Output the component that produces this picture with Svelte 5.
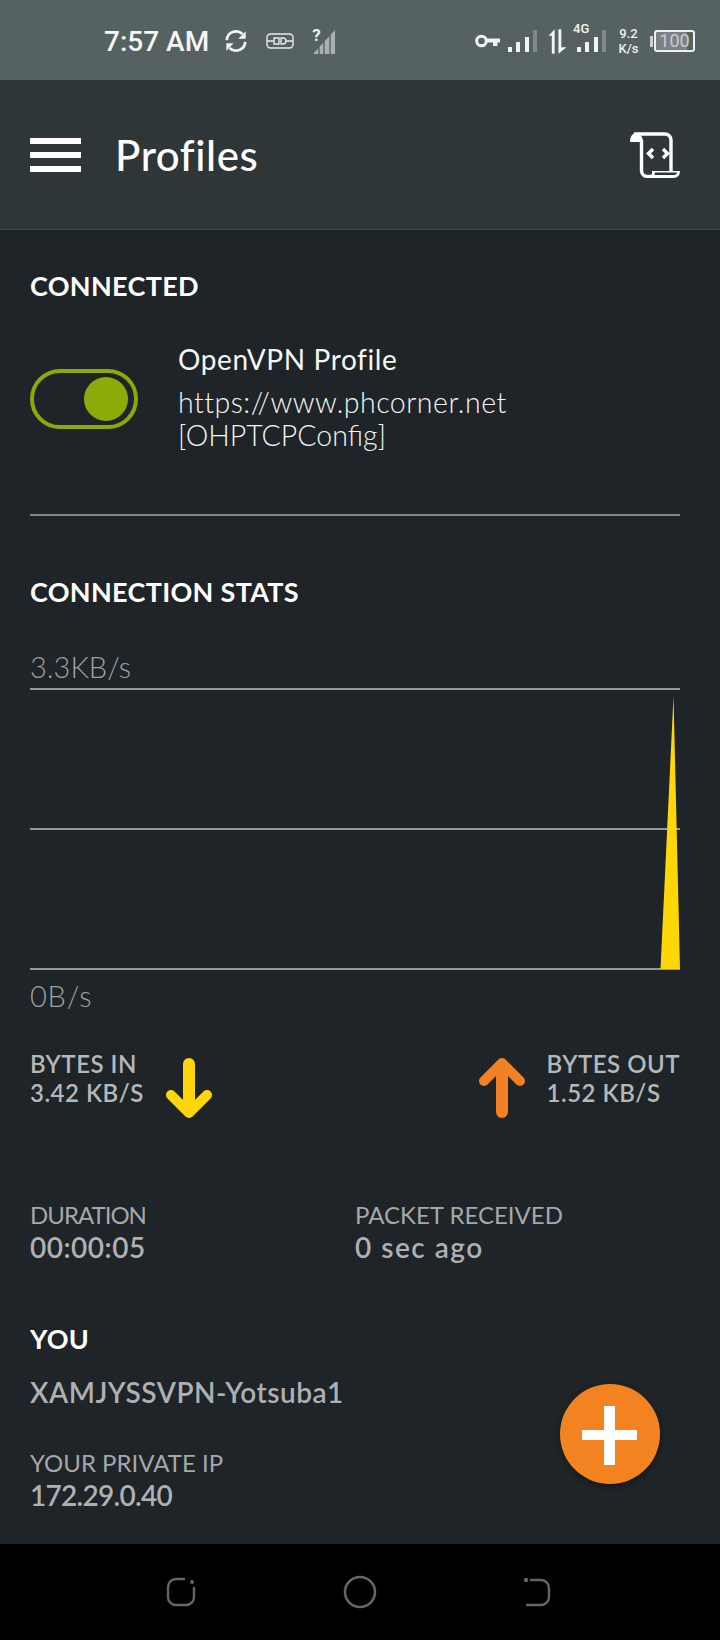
<script>
  const bars = [5, 10, 15]
</script>

<div class="phone">
  <header class="status">
    <div class="status-left">
      <span class="clock">7:57 AM</span>
      <svg class="ic-sync" width="24" height="26" viewBox="0 0 26 26" fill="none" stroke="#f2f4f4" stroke-width="3">
        <path d="M3 12a10 10 0 0 1 17-6.5" />
        <path d="M23 14a10 10 0 0 1-17 6.5" />
        <path d="M23.5 2.5v8h-8z" fill="#f2f4f4" stroke="none" />
        <path d="M2.5 23.5v-8h8z" fill="#f2f4f4" stroke="none" />
      </svg>
      <svg class="ic-plug" width="28" height="16" viewBox="0 0 28 16" fill="none" stroke="#e8ecec" stroke-width="1.4">
        <rect x="1" y="1" width="26" height="14" rx="3.5" />
        <path d="M1 8h7M20 8h7M8 5h5v6H8zM15 5h2a3 3 0 0 1 0 6h-2z" />
      </svg>
      <div class="nosim">
        <span class="q">?</span>
        <svg width="24" height="24" viewBox="0 0 24 24"><path d="M1 24l22-24v24z" fill="#a9b0b0" /><path d="M7 17v7M12 11v13M18 5v19" stroke="#56605f" stroke-width="1.4" /></svg>
      </div>
    </div>
    <div class="status-right">
      <svg width="25" height="14" viewBox="0 0 25 14" fill="none">
        <circle cx="6.5" cy="7" r="4.8" stroke="#f2f4f4" stroke-width="3" />
        <path d="M10 4.500h15v4h-2.600v3.500H18V8.500h-8z" fill="#f2f4f4" />
      </svg>
      <div class="sig">
        {#each bars as h}<i style="height:{h}px"></i>{/each}<i class="off"></i>
      </div>
      <svg class="updown" width="19" height="25" viewBox="0 0 20 26" fill="#f2f4f4">
        <path d="M7 0v26H4V7H0.600z" />
        <path d="M11 26V0h3v19h5.400z" />
      </svg>
      <div class="g4">
        <span>4G</span>
        <div class="sig small">
          {#each bars as h}<i style="height:{h}px"></i>{/each}<i class="off"></i>
        </div>
      </div>
      <div class="speed"><span>9.2</span><span>K/s</span></div>
      <div class="batt">
        <i class="nub"></i>
        <div class="cell">100</div>
      </div>
    </div>
  </header>

  <div class="toolbar">
    <div class="burger"><i></i><i></i><i></i></div>
    <h1>Profiles</h1>
    <svg class="script" width="50" height="46" viewBox="0 0 50 46" fill="none" stroke="#fff" stroke-width="3.4">
      <path d="M4 2h31a6 6 0 0 1 6 6v31" />
      <path d="M11.500 8v31a6 6 0 0 0 6 5.500h24" />
      <path d="M0 10c0-6 3-9 6-9s7 3 7 9z" fill="#fff" stroke="none" />
      <path d="M22 39h28c0 4-2 7-7 7H18c4-1 4-4 4-7z" fill="#fff" stroke="none" />
      <path d="M25 40.500h22c-.5 2-1.500 2.500-4 2.500H24.500z" fill="#2f3638" stroke="none" />
      <path d="M23 17l-4.500 4.500 4.500 4.500M33 17l4.500 4.500-4.500 4.500" stroke-width="3.4" />
    </svg>
  </div>

  <main class="content">
    <h2 class="first">CONNECTED</h2>
    <div class="profile">
      <div class="toggle"><i></i></div>
      <div class="info">
        <div class="name">OpenVPN Profile</div>
        <div class="server">https://www.phcorner.net</div>
        <div class="server config">[OHPTCPConfig]</div>
      </div>
    </div>
    <hr />

    <h2 class="stats-title">CONNECTION STATS</h2>
    <div class="axis top">3.3KB/s</div>
    <svg class="chart" width="650" height="282" viewBox="0 0 650 282">
      <path d="M0 1h650M0 141h650M0 281h650" stroke="#b9bdbe" stroke-width="1.6" />
      <polygon points="630.500,281 643.500,8 650,281" fill="#ffd60a" />
    </svg>
    <div class="axis bottom">0B/s</div>

    <div class="rates">
      <div class="rate">
        <div class="rate-text">
          <div>BYTES IN</div>
          <div>3.42 KB/S</div>
        </div>
        <svg width="50" height="62" viewBox="0 0 50 62" fill="none" stroke="#ffd60a" stroke-width="12" stroke-linecap="round" stroke-linejoin="round">
          <path d="M25 7v46" />
          <path d="M7 38l18 18 18-18" stroke-width="10" />
        </svg>
      </div>
      <div class="rate">
        <svg width="50" height="62" viewBox="0 0 50 62" fill="none" stroke="#f28123" stroke-width="12" stroke-linecap="round" stroke-linejoin="round">
          <path d="M25 55V9" />
          <path d="M7 24L25 6l18 18" stroke-width="10" />
        </svg>
        <div class="rate-text">
          <div>BYTES OUT</div>
          <div>1.52 KB/S</div>
        </div>
      </div>
    </div>

    <div class="meta">
      <div>
        <div class="label tight">DURATION</div>
        <div class="value">00:00:05</div>
      </div>
      <div>
        <div class="label">PACKET RECEIVED</div>
        <div class="value wide">0 sec ago</div>
      </div>
    </div>

    <h2 class="you">YOU</h2>
    <div class="value host">XAMJYSSVPN-Yotsuba1</div>
    <div class="label ip-label">YOUR PRIVATE IP</div>
    <div class="value ip">172.29.0.40</div>

    <button class="fab" aria-label="Add profile"><i class="h"></i><i class="v"></i></button>
  </main>

  <nav class="nav">
    <svg width="32" height="32" viewBox="0 0 32 32" fill="none" stroke="#666" stroke-width="2.4">
      <path d="M19 3h-8a8 8 0 0 0-8 8v10a8 8 0 0 0 8 8h10a8 8 0 0 0 8-8v-9" stroke-linecap="round" />
      <circle cx="27" cy="6" r="2" fill="#666" stroke="none" />
    </svg>
    <svg width="34" height="34" viewBox="0 0 34 34" fill="none" stroke="#666" stroke-width="2.6">
      <circle cx="17" cy="17" r="15" />
    </svg>
    <svg width="32" height="32" viewBox="0 0 32 32" fill="none" stroke="#666" stroke-width="2.4">
      <path d="M7 4h11a8 8 0 0 1 8 8v9a8 8 0 0 1-8 8H3" />
      <circle cx="3" cy="4" r="2.200" fill="#666" stroke="none" />
    </svg>
  </nav>
</div>

<style>
  :global(body) {
    margin: 0;
    background: #000;
  }

  .phone {
    width: 720px;
    height: 1640px;
    display: flex;
    flex-direction: column;
    overflow: hidden;
    font-family: Lato, "Open Sans", sans-serif;
    color: #fff;
  }

  .status {
    height: 80px;
    box-sizing: border-box;
    flex: none;
    display: flex;
    justify-content: space-between;
    align-items: center;
    padding: 2px 25px 0 104px;
    background: #566162;
    font-family: Roboto, sans-serif;
  }

  .status-left,
  .status-right {
    display: flex;
    align-items: center;
  }

  .clock {
    font-size: 28px;
    font-weight: 500;
    color: #f5f6f6;
    margin-right: 15px;
  }

  .ic-plug {
    margin-left: 18px;
    margin-right: 18px;
  }

  .nosim {
    position: relative;
    width: 24px;
    height: 26px;
  }

  .nosim svg {
    display: block;
    margin-top: 2px;
  }

  .q {
    position: absolute;
    left: 0;
    top: -3px;
    font-size: 17px;
    font-weight: 700;
    color: #eef0f0;
  }

  .sig {
    display: flex;
    align-items: flex-end;
    gap: 4.3px;
    height: 22px;
    margin-left: 8px;
  }

  .sig i {
    display: block;
    width: 4px;
    background: #f2f4f4;
  }

  .sig .off {
    height: 22px;
    background: #7f8a8a;
  }

  .updown {
    margin-left: 11px;
  }

  .g4 {
    position: relative;
    margin-left: 10px;
    width: 29px;
    height: 26px;
  }

  .g4 span {
    position: absolute;
    left: -4px;
    top: -7px;
    font-size: 13px;
    line-height: 15px;
    font-weight: 500;
    color: #f2f4f4;
  }

  .sig.small {
    position: absolute;
    left: 0;
    bottom: 2px;
    margin-left: 0;
  }

  .speed {
    display: flex;
    flex-direction: column;
    align-items: center;
    margin-left: 12px;
    width: 21px;
    font-size: 13px;
    line-height: 15px;
    font-weight: 500;
    color: #eef0f0;
  }

  .batt {
    position: relative;
    margin-left: 11px;
    padding-left: 4px;
  }

  .nub {
    position: absolute;
    left: 0;
    top: 6px;
    width: 3px;
    height: 11px;
    background: #cdd2d2;
  }

  .cell {
    box-sizing: border-box;
    width: 41px;
    height: 22px;
    border: 2px solid #eef0f0;
    border-radius: 3px;
    background: linear-gradient(90deg, #7a8283 84%, #566162 84%);
    color: #c8cccc;
    font-size: 18px;
    line-height: 18px;
    text-align: center;
  }

  .toolbar {
    height: 150px;
    box-sizing: border-box;
    flex: none;
    display: flex;
    align-items: center;
    padding: 0 40px 0 30px;
    background: #2f3638;
    border-bottom: 1px solid #3f4648;
  }

  .burger {
    display: flex;
    flex-direction: column;
    gap: 8px;
    width: 51px;
  }

  .burger i {
    display: block;
    height: 6px;
    background: #fff;
  }

  h1 {
    flex: 1;
    margin: 0 0 0 34px;
    font-size: 42px;
    font-weight: 500;
    letter-spacing: 0.6px;
    line-height: 1;
  }

  .content {
    position: relative;
    flex: 1;
    padding: 0 40px 0 30px;
    background: #1e2427;
  }

  h2 {
    margin: 0;
    font-size: 27px;
    font-weight: 700;
    letter-spacing: 0.3px;
    line-height: 32px;
    color: #fff;
  }

  .first {
    margin-top: 40px;
  }

  .profile {
    display: flex;
    align-items: center;
    margin-top: 40px;
  }

  .toggle {
    flex: none;
    box-sizing: border-box;
    width: 108px;
    height: 60px;
    margin-top: 4px;
    border: 4px solid #8aa90a;
    border-radius: 30px;
    display: flex;
    justify-content: flex-end;
    align-items: center;
    padding-right: 6px;
  }

  .toggle i {
    display: block;
    width: 44px;
    height: 44px;
    border-radius: 50%;
    background: #8aab08;
  }

  .info {
    margin-left: 40px;
    color: #f4f5f5;
  }

  .name {
    font-size: 28px;
    letter-spacing: 0.6px;
    line-height: 34px;
    margin-bottom: 10px;
  }

  .server {
    font-size: 28.500px;
    letter-spacing: 0.5px;
    line-height: 33px;
    font-weight: 300;
  }

  .config {
    letter-spacing: 0;
  }

  hr {
    margin: 62px 0 0;
    border: 0;
    height: 2px;
    background: #83878a;
  }

  .stats-title {
    margin-top: 60px;
  }

  .axis {
    font-size: 29px;
    font-weight: 300;
    line-height: 32px;
    color: #9da1a3;
  }

  .axis.top {
    margin-top: 43px;
    margin-bottom: 5px;
  }

  .axis.bottom {
    margin-top: 10px;
    letter-spacing: 0.8px;
  }

  .chart {
    display: block;
  }

  .rates {
    display: flex;
    justify-content: space-between;
    margin-top: 37px;
  }

  .rate {
    display: flex;
    gap: 20px;
    align-items: flex-start;
  }

  .rate svg {
    margin-top: 8px;
  }

  .rate-text {
    font-size: 24px;
    font-weight: 600;
    letter-spacing: 0.5px;
    line-height: 29px;
    color: #b4b8ba;
  }

  .meta {
    display: grid;
    grid-template-columns: 325px 1fr;
    margin-top: 81px;
  }

  .label {
    font-size: 24px;
    line-height: 30px;
    color: #a4a8aa;
  }

  .tight {
    letter-spacing: -1px;
  }

  .value {
    font-size: 28px;
    letter-spacing: 0.5px;
    line-height: 34px;
    font-weight: 600;
    color: #adb1b3;
    margin-top: 0;
  }

  .wide {
    letter-spacing: 1.500px;
  }

  .ip {
    letter-spacing: -0.7px;
  }

  .you {
    margin-top: 59px;
  }

  .host {
    margin-top: 20px;
  }

  .ip-label {
    margin-top: 39px;
  }

  .fab {
    position: absolute;
    left: 560px;
    top: 1154px;
    width: 100px;
    height: 100px;
    padding: 0;
    border: 0;
    border-radius: 50%;
    background: #f28320;
    box-shadow: 0 2px 6px rgba(0, 0, 0, 0.4);
  }

  .fab i {
    position: absolute;
    background: #fff;
  }

  .fab .h {
    left: 22px;
    top: 46px;
    width: 55px;
    height: 10px;
  }

  .fab .v {
    left: 44px;
    top: 22px;
    width: 11px;
    height: 59px;
  }

  .nav {
    height: 96px;
    flex: none;
    background: #000;
    display: flex;
    align-items: center;
    padding: 0 0 0 165px;
    gap: 146px;
  }
</style>
